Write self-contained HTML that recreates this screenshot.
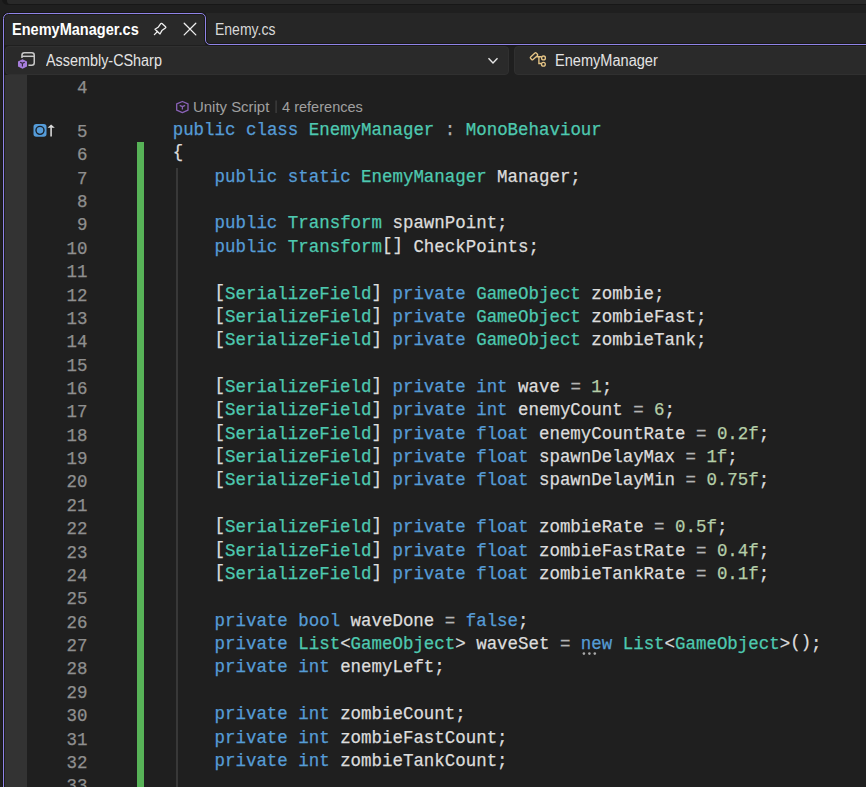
<!DOCTYPE html>
<html><head><meta charset="utf-8">
<style>
html,body{margin:0;padding:0;}
body{width:866px;height:787px;overflow:hidden;background:#1f1f1f;position:relative;font-family:"Liberation Sans",sans-serif;}
.abs{position:absolute;}
#topbar{left:2px;top:-10px;width:880px;height:14.6px;background:#171717;border-radius:6px;}
#topbar2{left:7px;top:-10px;width:880px;height:13.6px;background:#292929;border-radius:0 0 0 3px;}
#tabrow{left:206px;top:13px;width:660px;height:31px;background:#262626;}
#ddrow{left:4px;top:45px;width:862px;height:30px;background:#1f1f1f;}
#dd1{left:5px;top:45.7px;width:503.5px;height:29px;background:#2a2a2a;border:1px solid #303030;box-sizing:border-box;border-radius:4px;}
#dd2{left:514.3px;top:45.7px;width:360px;height:29px;background:#2a2a2a;border:1px solid #303030;box-sizing:border-box;border-radius:4px;}
#gutter{left:4px;top:75px;width:23px;height:712px;background:#333333;}
#green{left:137px;top:142px;width:7px;height:645px;background:#57b257;}
#guide{left:176px;top:168px;width:2px;height:619px;background:#383838;}
.ui{position:absolute;white-space:pre;color:#e8e8e8;font-size:15px;line-height:normal;transform-origin:0 0;}
.ln{position:absolute;left:172.7px;white-space:pre;font-family:"Liberation Mono",monospace;font-size:17.45px;line-height:23.37px;height:23.37px;color:#DCDCDC;-webkit-text-stroke:0.25px currentColor;}
.num{position:absolute;left:40px;width:47.5px;text-align:right;white-space:pre;font-family:"Liberation Mono",monospace;font-size:17.45px;line-height:23.37px;height:23.37px;color:#8f8f8f;-webkit-text-stroke:0.25px currentColor;}
.b{position:relative;top:-1.75px}.k{color:#569CD6}.t{color:#4EC9B0}.n{color:#B5CEA8}.o{color:#B4B4B4}
</style></head><body>
<div id="topbar" class="abs"></div>
<div id="topbar2" class="abs"></div>
<div id="tabrow" class="abs"></div>
<div id="ddrow" class="abs"></div>
<div id="dd1" class="abs"></div>
<div id="dd2" class="abs"></div>
<div id="gutter" class="abs"></div>

<svg class="abs" style="left:0;top:0" width="866" height="787" viewBox="0 0 866 787">
  <path d="M3.5 45 V18.5 A5 5 0 0 1 8.5 13.5 H201 A4.5 4.5 0 0 1 205.5 18 V45 Z" fill="#292929"/>
  <path d="M3.5 787 V18.5 A5 5 0 0 1 8.5 13.5 H201 A4.5 4.5 0 0 1 205.5 18 V40 A4.5 4.5 0 0 0 210 44.5 H866" fill="none" stroke="#161614" stroke-opacity="0.75" stroke-width="3"/>
  <path d="M3.5 787 V18.5 A5 5 0 0 1 8.5 13.5 H201 A4.5 4.5 0 0 1 205.5 18 V40 A4.5 4.5 0 0 0 210 44.5 H866" fill="none" stroke="#9084e8" stroke-width="1"/>
  <!-- pin -->
  <g transform="translate(148,18)" fill="none" stroke="#f0f0f0" stroke-width="1.3" stroke-linejoin="round" stroke-linecap="round">
    <path d="M7 11.2 L10.1 9.3 L12.6 5.8 Q13.2 5 14 5.6 L17.6 8.8 Q18.2 9.5 17.4 10 L13.9 12.6 L12 16 Z"/>
    <path d="M6.4 16.6 L9.5 13.5"/>
  </g>
  <!-- close X -->
  <g stroke="#f0f0f0" stroke-width="1.3" stroke-linecap="round">
    <path d="M184.2 23.2 L195.8 34.9 M195.8 23.2 L184.2 34.9"/>
  </g>
  <!-- assembly icon -->
  <g transform="translate(14,48)">
    <path d="M7.95 10 V7.2 Q7.95 4.75 10.4 4.75 H17.8 Q20.25 4.75 20.25 7.2 V14.8 Q20.25 17.25 17.8 17.25 H14.3" fill="none" stroke="#c8c8c8" stroke-width="1.5"/>
    <path d="M7.95 8.3 H20.25" stroke="#c8c8c8" stroke-width="1.5"/>
    <path d="M8.5 10 L14.2 13 V19 L8.5 22 L2.8 19 V13 Z" fill="#2b2b2b"/>
    <path d="M8.5 11.2 L13 13.6 V18.4 L8.5 20.8 L4 18.4 V13.6 Z" fill="#a67ddb"/>
    <path d="M6.2 14.3 L8.4 15.3 L10.7 14.3 M8.4 15.3 V18.6" fill="none" stroke="#2a2030" stroke-width="1.1"/>
  </g>
  <!-- chevron -->
  <path d="M488.5 58.3 L493 63 L497.5 58.3" fill="none" stroke="#e6e6e6" stroke-width="1.4"/>
  <!-- class icon -->
  <g transform="translate(524,46)" fill="none" stroke="#e6c586" stroke-width="1.35">
    <rect x="-3.9" y="-1.8" width="7.8" height="3.6" rx="1" transform="translate(10.0,10.3) rotate(-42)"/>
    <path d="M12.4 10.7 H17.6 M14.9 10.7 V17.5 H17.4"/>
    <circle cx="19.5" cy="11.9" r="1.9"/>
    <circle cx="19.4" cy="18.2" r="1.9"/>
  </g>
  <!-- codelens cube -->
  <g transform="translate(172,97)" fill="none" stroke="#8a62b8" stroke-width="1.3" stroke-linejoin="round">
    <path d="M10.4 4.5 L16 6.9 V13.2 L10.4 15.6 L4.7 13.2 V6.9 Z"/>
    <path d="M7.7 8.3 L10.4 9.6 L13.1 8.3 M10.4 9.6 V12.6"/>
  </g>
  <rect x="275.3" y="100.5" width="1.6" height="12.5" fill="#3a3a3a"/>
  <!-- margin icon -->
  <g transform="translate(28,118)">
    <rect x="5.5" y="5.9" width="13" height="12.9" rx="2.8" fill="#559cd9"/>
    <circle cx="12" cy="12.35" r="4" fill="none" stroke="#1a222b" stroke-width="1.4"/>
    <path d="M23.1 9.3 V18.5" stroke="#c2c2c2" stroke-width="1.8"/>
    <path d="M19.6 9.8 L23.1 6.6 L26.8 9.8 Z" fill="#dcdcdc"/>
  </g>
  <!-- new dots -->
  <g fill="#a8a8a8"><circle cx="583.9" cy="653.6" r="1.3"/><circle cx="589.4" cy="653.6" r="1.3"/><circle cx="594.8" cy="653.6" r="1.3"/></g>
</svg>
<div id="green" class="abs"></div>
<div id="guide" class="abs"></div>

<div class="ui" style="left:11.6px;top:21.3px;font-size:16px;font-weight:bold;color:#ffffff;transform:scaleX(0.908);">EnemyManager.cs</div>
<div class="ui" style="left:214.6px;top:21.3px;font-size:16px;color:#d8d8d8;transform:scaleX(0.875);">Enemy.cs</div>
<div class="ui" style="left:45.5px;top:51.5px;font-size:16px;color:#e4e4e4;transform:scaleX(0.899);">Assembly-CSharp</div>
<div class="ui" style="left:554.8px;top:51.5px;font-size:16px;color:#e4e4e4;transform:scaleX(0.91);">EnemyManager</div>
<div class="ui" style="left:193.2px;top:98.4px;font-size:15px;color:#a0a0a0;transform:scaleX(0.995);">Unity Script</div>
<div class="ui" style="left:282.4px;top:98.4px;font-size:15px;color:#a0a0a0;transform:scaleX(0.97);">4 references</div>

<div class="ln" style="top:75.05px"></div>
<div class="num" style="top:77.05px">4</div>
<div class="ln" style="top:118.92px"><span class="k">public</span> <span class="k">class</span> <span class="t">EnemyManager</span> <span class="o">:</span> <span class="t">MonoBehaviour</span></div>
<div class="num" style="top:120.92px">5</div>
<div class="ln" style="top:142.29px"><span class="b">{</span></div>
<div class="num" style="top:144.29px">6</div>
<div class="ln" style="top:165.66px">    <span class="k">public</span> <span class="k">static</span> <span class="t">EnemyManager</span> Manager;</div>
<div class="num" style="top:167.66px">7</div>
<div class="ln" style="top:189.03px"></div>
<div class="num" style="top:191.03px">8</div>
<div class="ln" style="top:212.40px">    <span class="k">public</span> <span class="t">Transform</span> spawnPoint;</div>
<div class="num" style="top:214.40px">9</div>
<div class="ln" style="top:235.77px">    <span class="k">public</span> <span class="t">Transform</span><span class="b">[</span><span class="b">]</span> CheckPoints;</div>
<div class="num" style="top:237.77px">10</div>
<div class="ln" style="top:259.14px"></div>
<div class="num" style="top:261.14px">11</div>
<div class="ln" style="top:282.51px">    <span class="b">[</span><span class="t">SerializeField</span><span class="b">]</span> <span class="k">private</span> <span class="t">GameObject</span> zombie;</div>
<div class="num" style="top:284.51px">12</div>
<div class="ln" style="top:305.88px">    <span class="b">[</span><span class="t">SerializeField</span><span class="b">]</span> <span class="k">private</span> <span class="t">GameObject</span> zombieFast;</div>
<div class="num" style="top:307.88px">13</div>
<div class="ln" style="top:329.25px">    <span class="b">[</span><span class="t">SerializeField</span><span class="b">]</span> <span class="k">private</span> <span class="t">GameObject</span> zombieTank;</div>
<div class="num" style="top:331.25px">14</div>
<div class="ln" style="top:352.62px"></div>
<div class="num" style="top:354.62px">15</div>
<div class="ln" style="top:375.99px">    <span class="b">[</span><span class="t">SerializeField</span><span class="b">]</span> <span class="k">private</span> <span class="k">int</span> wave <span class="o">=</span> <span class="n">1</span>;</div>
<div class="num" style="top:377.99px">16</div>
<div class="ln" style="top:399.36px">    <span class="b">[</span><span class="t">SerializeField</span><span class="b">]</span> <span class="k">private</span> <span class="k">int</span> enemyCount <span class="o">=</span> <span class="n">6</span>;</div>
<div class="num" style="top:401.36px">17</div>
<div class="ln" style="top:422.73px">    <span class="b">[</span><span class="t">SerializeField</span><span class="b">]</span> <span class="k">private</span> <span class="k">float</span> enemyCountRate <span class="o">=</span> <span class="n">0.2f</span>;</div>
<div class="num" style="top:424.73px">18</div>
<div class="ln" style="top:446.10px">    <span class="b">[</span><span class="t">SerializeField</span><span class="b">]</span> <span class="k">private</span> <span class="k">float</span> spawnDelayMax <span class="o">=</span> <span class="n">1f</span>;</div>
<div class="num" style="top:448.10px">19</div>
<div class="ln" style="top:469.47px">    <span class="b">[</span><span class="t">SerializeField</span><span class="b">]</span> <span class="k">private</span> <span class="k">float</span> spawnDelayMin <span class="o">=</span> <span class="n">0.75f</span>;</div>
<div class="num" style="top:471.47px">20</div>
<div class="ln" style="top:492.84px"></div>
<div class="num" style="top:494.84px">21</div>
<div class="ln" style="top:516.21px">    <span class="b">[</span><span class="t">SerializeField</span><span class="b">]</span> <span class="k">private</span> <span class="k">float</span> zombieRate <span class="o">=</span> <span class="n">0.5f</span>;</div>
<div class="num" style="top:518.21px">22</div>
<div class="ln" style="top:539.58px">    <span class="b">[</span><span class="t">SerializeField</span><span class="b">]</span> <span class="k">private</span> <span class="k">float</span> zombieFastRate <span class="o">=</span> <span class="n">0.4f</span>;</div>
<div class="num" style="top:541.58px">23</div>
<div class="ln" style="top:562.95px">    <span class="b">[</span><span class="t">SerializeField</span><span class="b">]</span> <span class="k">private</span> <span class="k">float</span> zombieTankRate <span class="o">=</span> <span class="n">0.1f</span>;</div>
<div class="num" style="top:564.95px">24</div>
<div class="ln" style="top:586.32px"></div>
<div class="num" style="top:588.32px">25</div>
<div class="ln" style="top:609.69px">    <span class="k">private</span> <span class="k">bool</span> waveDone <span class="o">=</span> <span class="k">false</span>;</div>
<div class="num" style="top:611.69px">26</div>
<div class="ln" style="top:633.06px">    <span class="k">private</span> <span class="t">List</span>&lt;<span class="t">GameObject</span>&gt; waveSet <span class="o">=</span> <span class="k">new</span> <span class="t">List</span>&lt;<span class="t">GameObject</span>&gt;<span class="b">(</span><span class="b">)</span>;</div>
<div class="num" style="top:635.06px">27</div>
<div class="ln" style="top:656.43px">    <span class="k">private</span> <span class="k">int</span> enemyLeft;</div>
<div class="num" style="top:658.43px">28</div>
<div class="ln" style="top:679.80px"></div>
<div class="num" style="top:681.80px">29</div>
<div class="ln" style="top:703.17px">    <span class="k">private</span> <span class="k">int</span> zombieCount;</div>
<div class="num" style="top:705.17px">30</div>
<div class="ln" style="top:726.54px">    <span class="k">private</span> <span class="k">int</span> zombieFastCount;</div>
<div class="num" style="top:728.54px">31</div>
<div class="ln" style="top:749.91px">    <span class="k">private</span> <span class="k">int</span> zombieTankCount;</div>
<div class="num" style="top:751.91px">32</div>
<div class="ln" style="top:773.28px"></div>
<div class="num" style="top:775.28px">33</div>
</body></html>
